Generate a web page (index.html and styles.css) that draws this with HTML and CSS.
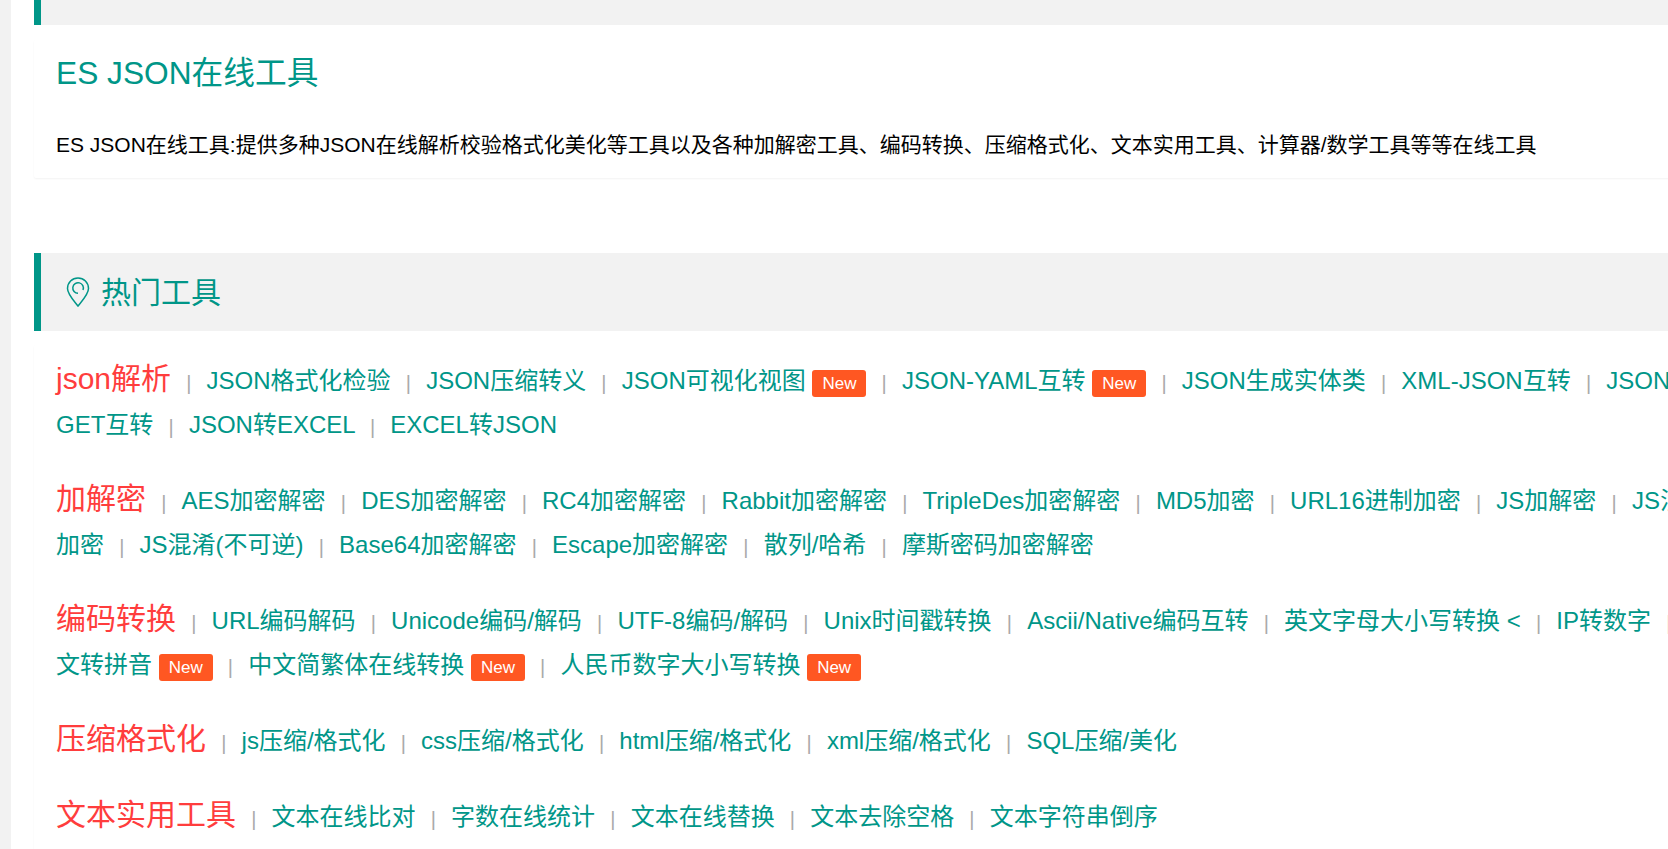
FILE: index.html
```html
<!DOCTYPE html>
<html lang="zh-CN">
<head>
<meta charset="utf-8">
<title>ES JSON在线工具</title>
<link rel="stylesheet" href="styles.css">
</head>
<body>
<main class="page">
  <div class="quote quote-top"></div>
  <section class="card intro">
    <h1 class="title">ES JSON在线工具</h1>
    <p class="desc">ES JSON在线工具:提供多种JSON在线解析校验格式化美化等工具以及各种加解密工具、编码转换、压缩格式化、文本实用工具、计算器/数学工具等等在线工具</p>
  </section>
  <h2 class="quote heading">
    <svg class="pin" viewBox="0 0 24 30" aria-hidden="true"><path d="M12 29 C9 25 1.5 17.5 1.5 11.5 A10.5 10.5 0 0 1 22.5 11.5 C22.5 17.5 15 25 12 29 Z"/><path d="M12 16.3 A5.3 5.3 0 1 1 17 13"/></svg>
    <span class="heading-text">热门工具</span>
  </h2>
  <section class="card tools">
    <p class="group"><span class="label">json解析</span> <i class="sep">|</i> <a class="tool">JSON格式化检验</a> <i class="sep">|</i> <a class="tool">JSON压缩转义</a> <i class="sep">|</i> <a class="tool">JSON可视化视图</a> <b class="badge">New</b> <i class="sep">|</i> <a class="tool">JSON-YAML互转</a> <b class="badge">New</b> <i class="sep">|</i> <a class="tool">JSON生成实体类</a> <i class="sep">|</i> <a class="tool">XML-JSON互转</a> <i class="sep">|</i> <a class="tool">JSON-GET互转</a> <i class="sep">|</i> <a class="tool">JSON转EXCEL</a> <i class="sep">|</i> <a class="tool">EXCEL转JSON</a></p>
    <p class="group"><span class="label">加解密</span> <i class="sep">|</i> <a class="tool">AES加密解密</a> <i class="sep">|</i> <a class="tool">DES加密解密</a> <i class="sep">|</i> <a class="tool">RC4加密解密</a> <i class="sep">|</i> <a class="tool">Rabbit加密解密</a> <i class="sep">|</i> <a class="tool">TripleDes加密解密</a> <i class="sep">|</i> <a class="tool">MD5加密</a> <i class="sep">|</i> <a class="tool">URL16进制加密</a> <i class="sep">|</i> <a class="tool">JS加解密</a> <i class="sep">|</i> <a class="tool">JS混淆加密</a> <i class="sep">|</i> <a class="tool">JS混淆(不可逆)</a> <i class="sep">|</i> <a class="tool">Base64加密解密</a> <i class="sep">|</i> <a class="tool">Escape加密解密</a> <i class="sep">|</i> <a class="tool">散列/哈希</a> <i class="sep">|</i> <a class="tool">摩斯密码加密解密</a></p>
    <p class="group"><span class="label">编码转换</span> <i class="sep">|</i> <a class="tool">URL编码解码</a> <i class="sep">|</i> <a class="tool">Unicode编码/解码</a> <i class="sep">|</i> <a class="tool">UTF-8编码/解码</a> <i class="sep">|</i> <a class="tool">Unix时间戳转换</a> <i class="sep">|</i> <a class="tool">Ascii/Native编码互转</a> <i class="sep">|</i> <a class="tool">英文字母大小写转换 &lt;</a> <i class="sep">|</i> <a class="tool">IP转数字</a> <i class="sep">|</i> <a class="tool">中文转拼音</a> <b class="badge">New</b> <i class="sep">|</i> <a class="tool">中文简繁体在线转换</a> <b class="badge">New</b> <i class="sep">|</i> <a class="tool">人民币数字大小写转换</a> <b class="badge">New</b></p>
    <p class="group"><span class="label">压缩格式化</span> <i class="sep">|</i> <a class="tool">js压缩/格式化</a> <i class="sep">|</i> <a class="tool">css压缩/格式化</a> <i class="sep">|</i> <a class="tool">html压缩/格式化</a> <i class="sep">|</i> <a class="tool">xml压缩/格式化</a> <i class="sep">|</i> <a class="tool">SQL压缩/美化</a></p>
    <p class="group"><span class="label">文本实用工具</span> <i class="sep">|</i> <a class="tool">文本在线比对</a> <i class="sep">|</i> <a class="tool">字数在线统计</a> <i class="sep">|</i> <a class="tool">文本在线替换</a> <i class="sep">|</i> <a class="tool">文本去除空格</a> <i class="sep">|</i> <a class="tool">文本字符串倒序</a></p>
  </section>
</main>
</body>
</html>
```

FILE: styles.css
```css
html, body {
  margin: 0;
  height: 849px;
  overflow: hidden;
  background: #f2f2f2;
}
body {
  font-family: "Liberation Sans", "Noto Sans CJK SC", sans-serif;
}
.page {
  width: 1760px;
  height: 849px;
  margin-left: 11px;
  padding: 0 23px;
  background: #fff;
  box-sizing: border-box;
  overflow: hidden;
}
.quote {
  margin: 0;
  background: #f2f2f2;
  border-left: 7px solid #009688;
}
.quote-top {
  height: 25px;
}
.card {
  background: #fff;
  border-radius: 2px;
  box-shadow: 0 1px 2px rgba(0, 0, 0, 0.05);
}
.intro {
  height: 138px;
  margin-top: 15px;
  margin-bottom: 75px;
  padding: 0 22px;
  box-sizing: border-box;
}
.title {
  margin: 0;
  padding-top: 8px;
  font-size: 31.7px;
  line-height: 50px;
  font-weight: 400;
  color: #009688;
}
.desc {
  margin: 0;
  padding-top: 31px;
  font-size: 21px;
  line-height: 32px;
  color: #000;
}
.heading {
  display: flex;
  align-items: center;
  height: 78px;
  padding-left: 25px;
  box-sizing: border-box;
  font-size: 30px;
  font-weight: 400;
  color: #009688;
}
.heading-text {
  padding-bottom: 5px;
}
.pin {
  width: 24px;
  height: 30px;
  margin-right: 11px;
  fill: none;
  stroke: #009688;
  stroke-width: 1.5;
}
.tools {
  margin-top: 14px;
  padding: 14px 22px 60px;
}
.group {
  margin: 0 0 32.8px;
  font-size: 24px;
  line-height: 43.6px;
}
.label {
  font-size: 30px;
  line-height: 1;
  color: #ff3d3d;
}
.sep {
  margin: 0 8.5px;
  font-style: normal;
  font-size: 20px;
  line-height: 1;
  color: #aaa;
  vertical-align: -1px;
}
.tool {
  color: #009688;
}
.badge {
  display: inline-block;
  height: 27px;
  padding: 0 10px;
  border-radius: 3px;
  background: #ff5722;
  color: #fff;
  font-size: 17px;
  font-weight: 400;
  line-height: 27px;
  vertical-align: 0;
}
```
